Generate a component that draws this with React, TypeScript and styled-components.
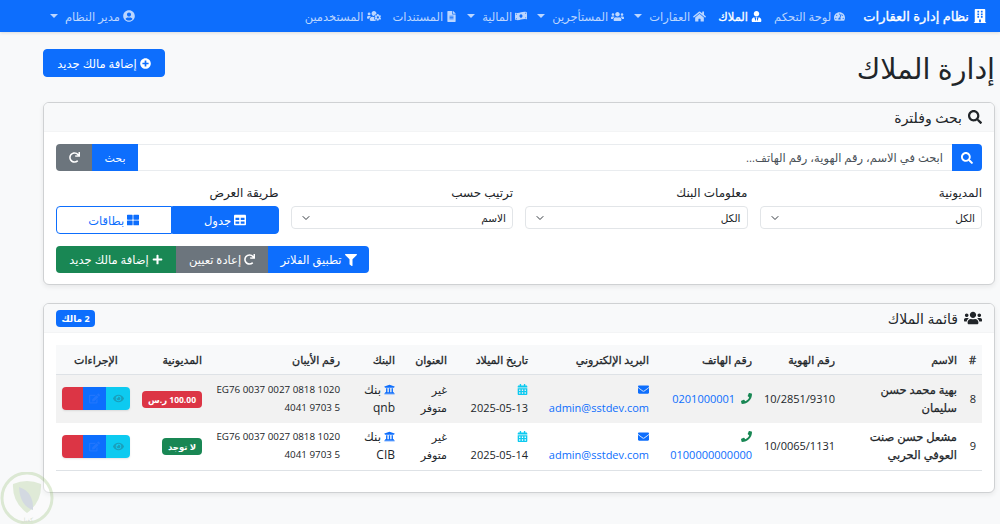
import React from "react";
import styled, { createGlobalStyle } from "styled-components";
import { ChevronDown } from "lucide-react";
import {
  FaBuilding, FaTachometerAlt, FaUserTie, FaHome, FaUsers, FaMoneyBillWave, FaFileAlt, FaUsersCog,
  FaUserCircle, FaPlusCircle, FaSearch, FaRedo, FaTable, FaThLarge, FaFilter, FaPlus, FaPhone,
  FaEnvelope, FaCalendarAlt, FaUniversity, FaEye, FaEdit,
} from "react-icons/fa";

const Global = createGlobalStyle`
  html, body { margin: 0; padding: 0; height: 100%; background: #f8f9fa; overflow: hidden; }
  body { font-family: "Open Sans", "Noto Sans", "DejaVu Sans", sans-serif; color: #212529; font-size: 12px; }
  * { box-sizing: border-box; }
`;

const Page = styled.div`
  direction: rtl;
  height: 524px;
  position: relative;
  overflow: hidden;
`;
const Nav = styled.nav`
  height: 32px;
  background: #0d6efd;
  display: flex;
  align-items: center;
  justify-content: space-between;
  padding: 0 13px 0 50px;
  box-shadow: 0 1px 3px rgba(0, 0, 0, 0.12);
`;
const NavMain = styled.div`
  display: flex;
  align-items: center;
`;
const Brand = styled.div`
  display: flex;
  align-items: center;
  gap: 4px;
  color: #fff;
  font-size: 13px;
  -webkit-text-stroke: 0.3px #fff;
  margin-left: 18px;
  white-space: nowrap;
`;
const NavItem = styled.div<{ $active?: boolean; $gap?: number }>`
  display: flex;
  align-items: center;
  gap: 3px;
  color: ${(p) => (p.$active ? "#fff" : "rgba(255,255,255,0.72)")};
  font-size: 11.5px;
  -webkit-text-stroke: ${(p) => (p.$active ? "0.3px #fff" : "0")};
  margin-left: ${(p) => p.$gap ?? 12}px;
  white-space: nowrap;
`;
const Caret = styled.span`
  width: 0;
  height: 0;
  border-top: 4px solid rgba(255, 255, 255, 0.72);
  border-left: 4px solid transparent;
  border-right: 4px solid transparent;
  margin-right: 4px;
`;
const Main = styled.main`
  padding: 0 5px 0 43px;
`;
const Header = styled.header`
  display: flex;
  align-items: center;
  justify-content: space-between;
  height: 70px;
`;
const Title = styled.h1`
  margin: 2px 0 0;
  font-size: 28.5px;
  font-weight: 400;
  color: #212529;
`;
const AddButton = styled.button`
  height: 28px;
  width: 122px;
  margin-top: -8px;
  border: 1px solid #0d6efd;
  border-radius: 4px;
  background: #0d6efd;
  color: #fff;
  font: inherit;
  font-size: 11.5px;
  display: flex;
  align-items: center;
  justify-content: center;
  gap: 3px;
`;
const Card = styled.section<{ $h: number }>`
  background: #fff;
  border: 1px solid #cfd1d3;
  border-radius: 6px;
  height: ${(p) => p.$h}px;
  box-shadow: 0 2px 5px rgba(0, 0, 0, 0.07);
  margin-bottom: 18px;
  overflow: hidden;
`;
const CardHead = styled.div`
  height: 29px;
  background: #f8f9fa;
  display: flex;
  align-items: center;
  justify-content: space-between;
  padding: 0 12px;
  font-size: 14px;
  color: #212529;
  border-bottom: 1px solid #f3f4f5;
`;
const HeadTitle = styled.div`
  display: flex;
  align-items: center;
  gap: 6px;
`;
const CardBody = styled.div`
  padding: 12px;
  display: flex;
  flex-direction: column;
`;
const SearchRow = styled.div`
  display: flex;
  height: 27px;
  margin-bottom: 14px;
`;
const SearchIcon = styled.div`
  width: 30px;
  background: #0d6efd;
  color: #fff;
  display: flex;
  align-items: center;
  justify-content: center;
  border-radius: 0 4px 4px 0;
  font-size: 12px;
`;
const SearchInput = styled.div`
  flex: 1;
  border-top: 1px solid #e9ecef;
  border-bottom: 1px solid #e9ecef;
  display: flex;
  align-items: center;
  padding-right: 9px;
  font-size: 11.5px;
  color: #495057;
`;
const SearchBtn = styled.button<{ $c: string; $w: number; $end?: boolean }>`
  width: ${(p) => p.$w}px;
  background: ${(p) => p.$c};
  border: 0;
  color: #fff;
  font: inherit;
  font-size: 11px;
  padding: 0;
  display: flex;
  align-items: center;
  justify-content: center;
  border-radius: ${(p) => (p.$end ? "4px 0 0 4px" : "0")};
`;
const FilterGrid = styled.div`
  display: grid;
  grid-template-columns: repeat(4, 1fr);
  column-gap: 12px;
  margin-bottom: 12px;
`;
const Field = styled.div`
  display: flex;
  flex-direction: column;
`;
const Label = styled.label`
  font-size: 12px;
  height: 21px;
  line-height: 16px;
  color: #212529;
`;
const Select = styled.div`
  height: 23px;
  border: 1px solid #e2e5e8;
  border-radius: 4px;
  display: flex;
  align-items: center;
  justify-content: space-between;
  padding: 0 6px 0 8px;
  font-size: 10.5px;
  color: #212529;
`;
const ViewGroup = styled.div`
  display: flex;
  height: 28px;
`;
const ViewBtn = styled.button<{ $on?: boolean }>`
  flex: ${(p) => (p.$on ? "0 0 107px" : "1")};
  border: 1px solid #0d6efd;
  background: ${(p) => (p.$on ? "#0d6efd" : "#fff")};
  color: ${(p) => (p.$on ? "#fff" : "#0d6efd")};
  font: inherit;
  font-size: 11.5px;
  padding: 0;
  display: flex;
  align-items: center;
  justify-content: center;
  gap: 3px;
  border-radius: ${(p) => (p.$on ? "0 4px 4px 0" : "4px 0 0 4px")};
`;
const ActionRow = styled.div`
  display: flex;
  justify-content: flex-end;
  height: 27px;
`;
const ActionBtn = styled.button<{ $c: string; $w: number; $pos?: "start" | "end" }>`
  width: ${(p) => p.$w}px;
  background: ${(p) => p.$c};
  border: 0;
  color: #fff;
  font: inherit;
  font-size: 11.5px;
  padding: 0;
  display: flex;
  align-items: center;
  justify-content: center;
  gap: 3px;
  border-radius: ${(p) => (p.$pos === "start" ? "0 4px 4px 0" : p.$pos === "end" ? "4px 0 0 4px" : "0")};
`;
const CountBadge = styled.span`
  background: #0d6efd;
  color: #fff;
  font-size: 9px;
  font-weight: 700;
  width: 39px;
  height: 17px;
  border-radius: 4px;
  display: flex;
  align-items: center;
  justify-content: center;
`;
const Table = styled.table`
  width: 926px;
  border-collapse: collapse;
  table-layout: fixed;
  font-size: 11px;
  color: #212529;
`;
const Th = styled.th<{ $center?: boolean }>`
  height: 29px;
  padding: 0 6px;
  background: #f8f9fa;
  font-size: 11px;
  font-weight: 400;
  -webkit-text-stroke: 0.3px #212529;
  text-align: ${(p) => (p.$center ? "center" : "right")};
  border-bottom: 1px solid #dee2e6;
  white-space: nowrap;
`;
const Tr = styled.tr<{ $shade?: boolean; $last?: boolean }>`
  height: ${(p) => (p.$shade ? 49 : 47)}px;
  background: ${(p) => (p.$shade ? "#f2f2f2" : "#fff")};
  border-bottom: ${(p) => (p.$last ? "1px solid #dee2e6" : "0")};
`;
const Td = styled.td<{ $center?: boolean }>`
  padding: 0 6px;
  line-height: 18px;
  text-align: ${(p) => (p.$center ? "center" : "right")};
  vertical-align: middle;
`;
const NameTd = styled(Td)`
  font-size: 11.5px;
  -webkit-text-stroke: 0.25px #212529;
`;
const BankTd = styled(Td)`
  font-size: 12px;
`;
const IbanTd = styled(Td)`
  font-size: 9.8px;
  padding-left: 0;
`;
const Link = styled.span`
  color: #0d6efd;
`;
const Ltr = styled.span`
  direction: ltr;
  unicode-bidi: isolate;
`;
const IconSpan = styled.span<{ $c: string }>`
  color: ${(p) => p.$c};
  font-size: 11px;
  margin-left: 3px;
  line-height: 0;
  vertical-align: -1px;
`;
const DebtBadge = styled.span<{ $c: string }>`
  display: inline-block;
  background: ${(p) => p.$c};
  color: #fff;
  font-size: 8.5px;
  font-weight: 700;
  line-height: 17px;
  padding: 0 6px;
  border-radius: 4px;
  white-space: nowrap;
`;
const BtnGroup = styled.div`
  display: inline-flex;
  height: 23px;
  width: 68px;
  border-radius: 4px;
  overflow: hidden;
  box-shadow: 0 1px 2px rgba(0, 0, 0, 0.1);
  vertical-align: middle;
`;
const RowBtn = styled.span<{ $c: string; $fg: string; $w: number }>`
  width: ${(p) => p.$w}px;
  background: ${(p) => p.$c};
  color: ${(p) => p.$fg};
  font-size: 11px;
  display: flex;
  align-items: center;
  justify-content: center;
`;
const Watermark = styled.svg`
  position: absolute;
  left: 0;
  top: 472px;
  opacity: 0.3;
`;

const widths = [19, 122, 83, 103, 121, 81, 52, 55, 138, 72, 80];
const heads = ["#", "الاسم", "رقم الهوية", "رقم الهاتف", "البريد الإلكتروني", "تاريخ الميلاد", "العنوان", "البنك", "رقم الأيبان", "المديونية"];

const rows = [
  { id: 8, name: "بهية محمد حسن سليمان", nid: "10/2851/9310", phone: "0201000001", date: "2025-05-13", bank: "qnb", debt: "100.00 ر.س", c: "#dc3545", shade: true },
  { id: 9, name: "مشعل حسن صنت العوفي الحربي", nid: "10/0065/1131", phone: "0100000000000", date: "2025-05-14", bank: "CIB", debt: "لا توجد", c: "#198754", shade: false },
];

const Chevron = () => <ChevronDown size={12} strokeWidth={2} color="#343a40" />;

export default function App() {
  return (
    <Page>
      <Global />
      <Nav>
        <NavMain>
          <Brand><FaBuilding size={14} />نظام إدارة العقارات</Brand>
          <NavItem><FaTachometerAlt size={11} />لوحة التحكم</NavItem>
          <NavItem $active><FaUserTie size={11} />الملاك</NavItem>
          <NavItem $gap={10}><FaHome size={13} />العقارات<Caret /></NavItem>
          <NavItem $gap={10}><FaUsers size={13} />المستأجرين<Caret /></NavItem>
          <NavItem $gap={10}><FaMoneyBillWave size={12} />المالية<Caret /></NavItem>
          <NavItem><FaFileAlt size={11} />المستندات</NavItem>
          <NavItem $gap={0}><FaUsersCog size={14} />المستخدمين</NavItem>
        </NavMain>
        <NavItem $gap={0}><FaUserCircle size={12} />مدير النظام<Caret /></NavItem>
      </Nav>
      <Main>
        <Header>
          <Title>إدارة الملاك</Title>
          <AddButton><FaPlusCircle size={11} />إضافة مالك جديد</AddButton>
        </Header>
        <Card $h={183}>
          <CardHead><HeadTitle><FaSearch size={14} />بحث وفلترة</HeadTitle></CardHead>
          <CardBody>
            <SearchRow>
              <SearchIcon><FaSearch /></SearchIcon>
              <SearchInput>ابحث في الاسم، رقم الهوية، رقم الهاتف...</SearchInput>
              <SearchBtn $c="#0d6efd" $w={46}>بحث</SearchBtn>
              <SearchBtn $c="#6c757d" $w={36} $end><FaRedo size={11} /></SearchBtn>
            </SearchRow>
            <FilterGrid>
              <Field><Label>المديونية</Label><Select>الكل<Chevron /></Select></Field>
              <Field><Label>معلومات البنك</Label><Select>الكل<Chevron /></Select></Field>
              <Field><Label>ترتيب حسب</Label><Select>الاسم<Chevron /></Select></Field>
              <Field>
                <Label>طريقة العرض</Label>
                <ViewGroup>
                  <ViewBtn $on><FaTable size={12} />جدول</ViewBtn>
                  <ViewBtn><FaThLarge size={12} />بطاقات</ViewBtn>
                </ViewGroup>
              </Field>
            </FilterGrid>
            <ActionRow>
              <ActionBtn $c="#0d6efd" $w={101} $pos="start"><FaFilter size={12} />تطبيق الفلاتر</ActionBtn>
              <ActionBtn $c="#6c757d" $w={92}><FaRedo size={11} />إعادة تعيين</ActionBtn>
              <ActionBtn $c="#198754" $w={120} $pos="end"><FaPlus size={11} />إضافة مالك جديد</ActionBtn>
            </ActionRow>
          </CardBody>
        </Card>
        <Card $h={190}>
          <CardHead>
            <HeadTitle><FaUsers size={18} />قائمة الملاك</HeadTitle>
            <CountBadge>2 مالك</CountBadge>
          </CardHead>
          <CardBody>
            <Table>
              <colgroup>{widths.map((w, i) => <col key={i} style={{ width: w }} />)}</colgroup>
              <thead>
                <tr>
                  {heads.map((h) => <Th key={h}>{h}</Th>)}
                  <Th $center>الإجراءات</Th>
                </tr>
              </thead>
              <tbody>
                {rows.map((r, i) => (
                  <Tr key={r.id} $shade={r.shade} $last={i === 1}>
                    <Td>{r.id}</Td>
                    <NameTd>{r.name}</NameTd>
                    <Td><Ltr>{r.nid}</Ltr></Td>
                    <Td><IconSpan $c="#198754"><FaPhone /></IconSpan> <Link>{r.phone}</Link></Td>
                    <Td><IconSpan $c="#0d6efd"><FaEnvelope /></IconSpan><br /><Link>admin@sstdev.com</Link></Td>
                    <Td><IconSpan $c="#0dcaf0"><FaCalendarAlt /></IconSpan><br />{r.date}</Td>
                    <Td>غير متوفر</Td>
                    <BankTd><IconSpan $c="#0d6efd"><FaUniversity /></IconSpan>بنك {r.bank}</BankTd>
                    <IbanTd><Ltr>EG76 0037 0027 0818 1020 4041 9703 5</Ltr></IbanTd>
                    <Td><DebtBadge $c={r.c}>{r.debt}</DebtBadge></Td>
                    <Td $center>
                      <BtnGroup>
                        <RowBtn $c="#0dcaf0" $w={24} $fg="#1a9fbb"><FaEye /></RowBtn>
                        <RowBtn $c="#0d6efd" $w={23} $fg="#2176fd"><FaEdit /></RowBtn>
                        <RowBtn $c="#dc3545" $w={21} $fg="#dc3545" />
                      </BtnGroup>
                    </Td>
                  </Tr>
                ))}
              </tbody>
            </Table>
          </CardBody>
        </Card>
      </Main>
      <Watermark width="54" height="54" viewBox="0 0 54 54">
        <circle cx="27" cy="26" r="25" fill="#fff" stroke="#9cc27a" strokeWidth="3" />
        <path d="M13 12 Q27 6 41 12 Q42 30 27 41 Q12 30 13 12Z" fill="#a8c98a" />
        <path d="M19 15 Q34 20 33 38 Q20 34 19 15Z" fill="#7f93a8" />
        <text x="27" y="50" fontSize="6" textAnchor="middle" fill="#88a070">كفيل</text>
      </Watermark>
    </Page>
  );
}
